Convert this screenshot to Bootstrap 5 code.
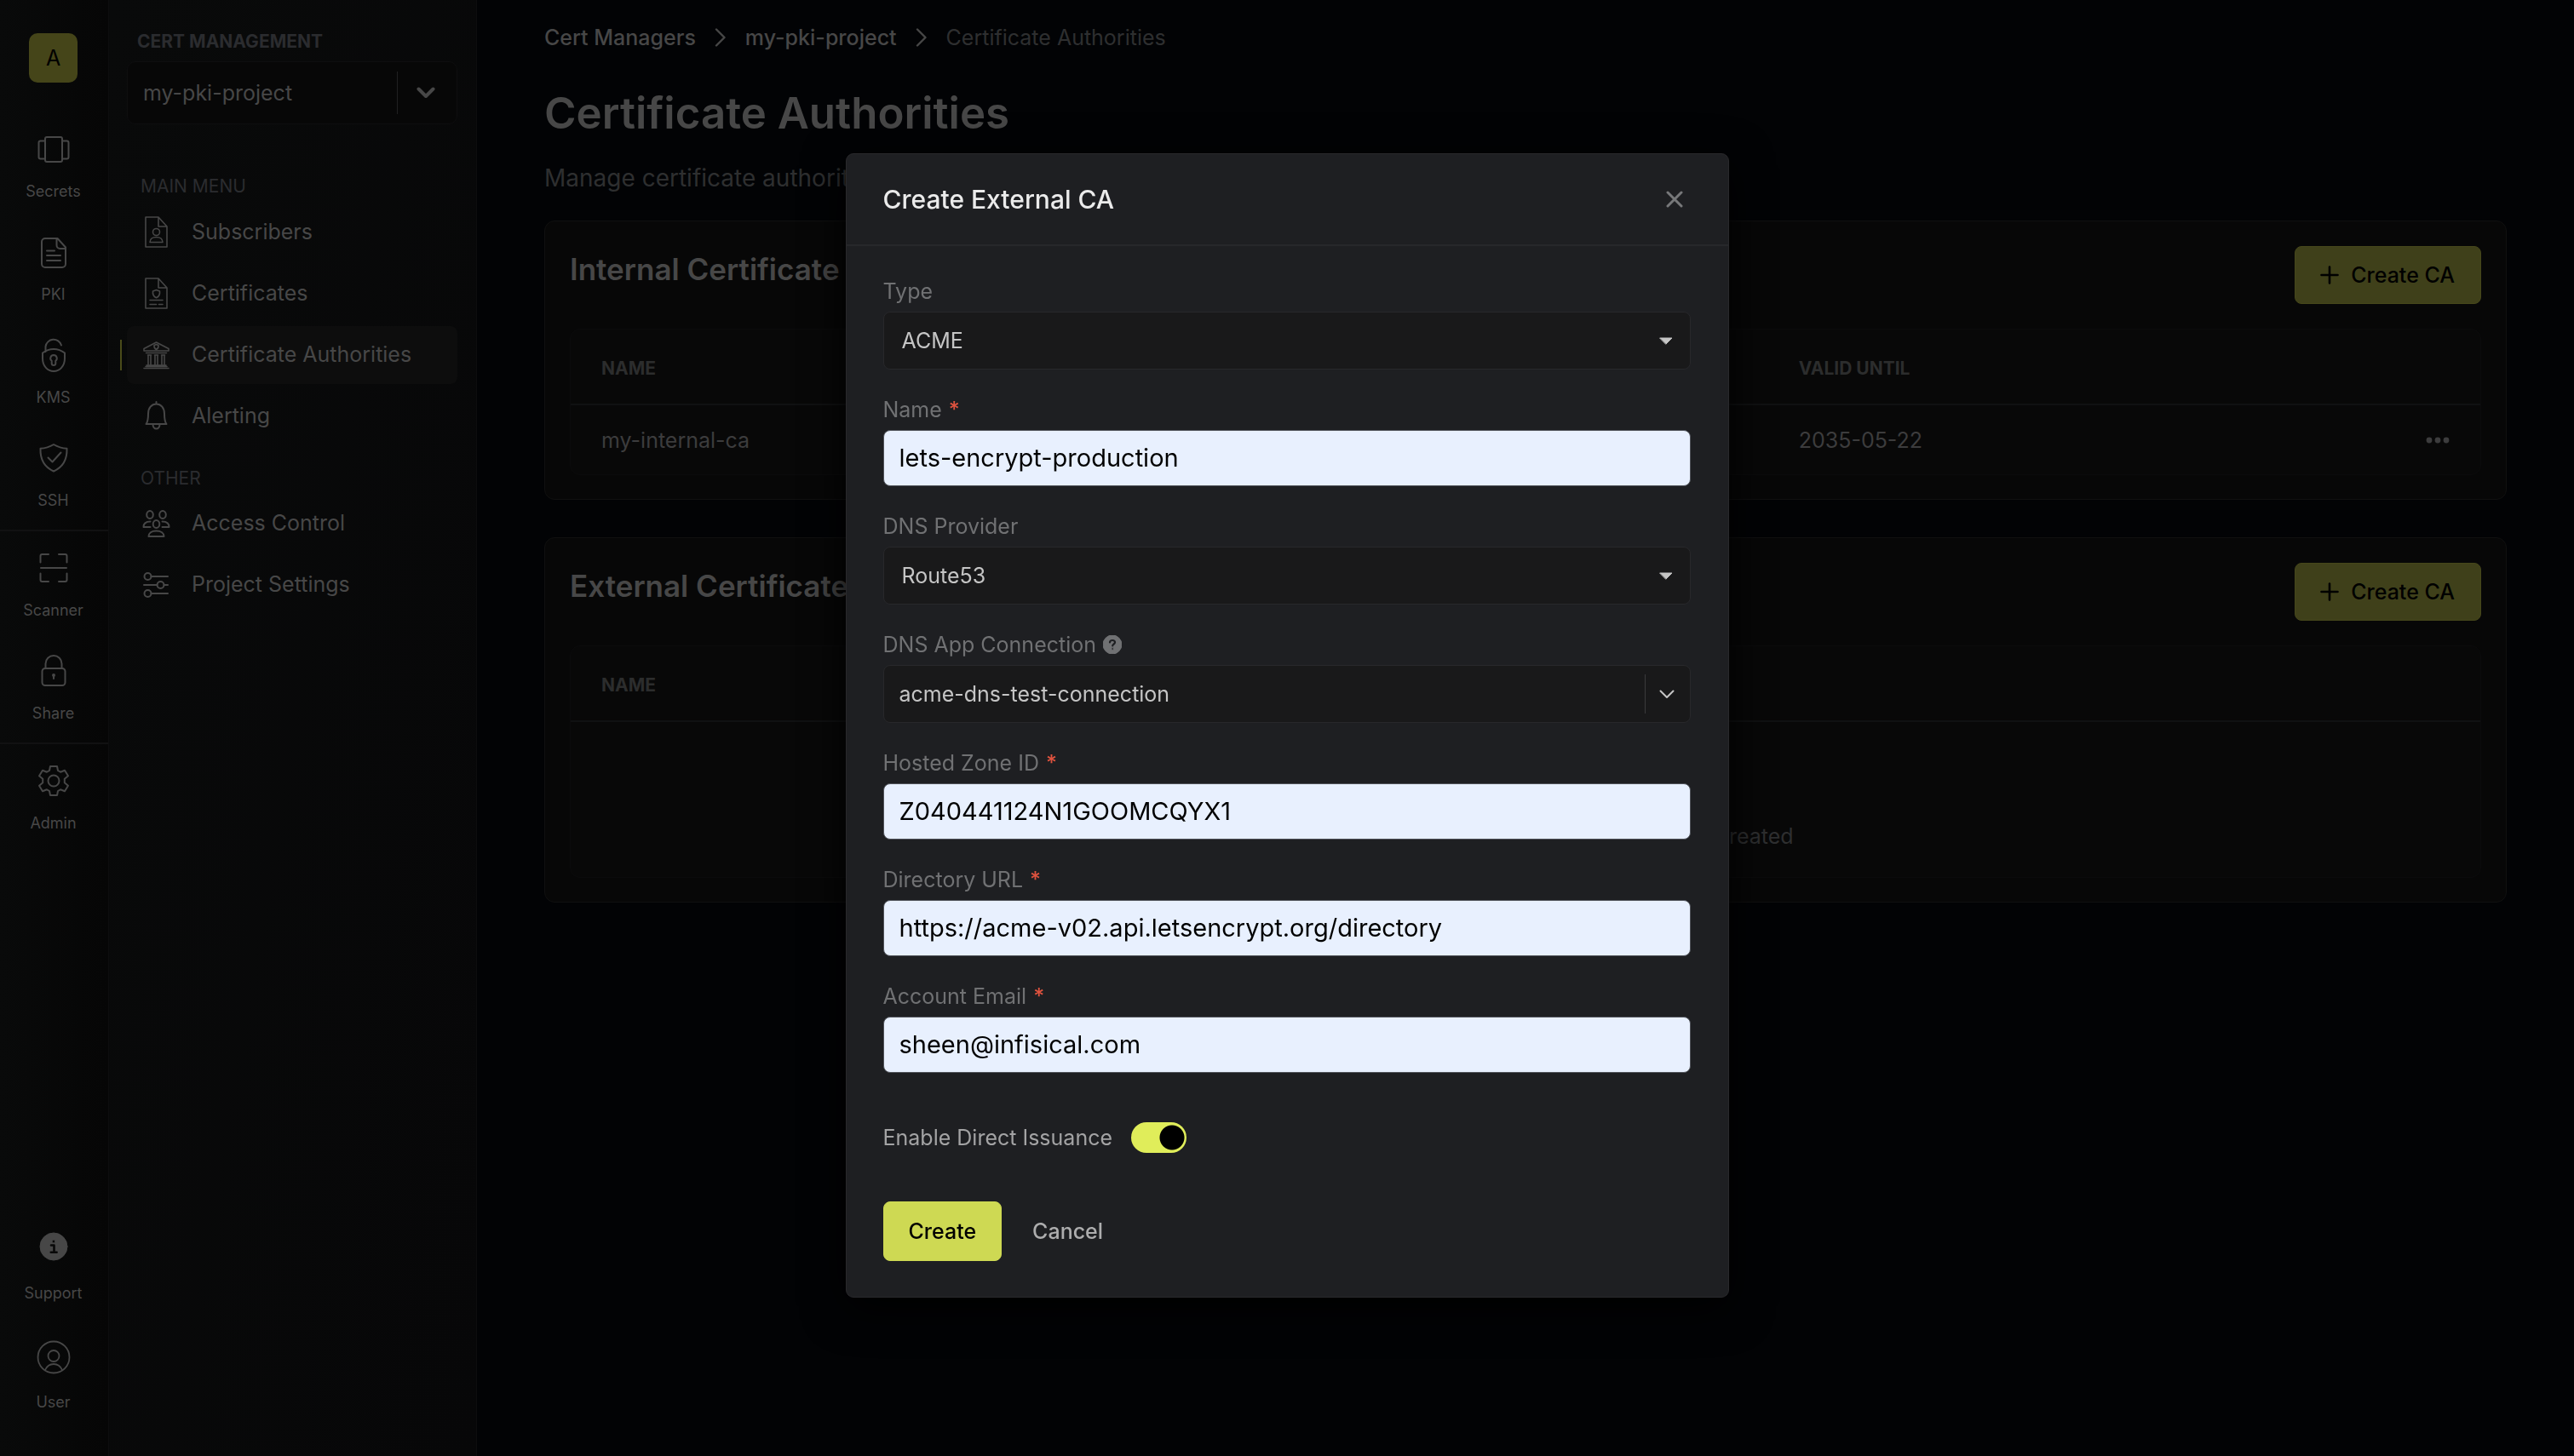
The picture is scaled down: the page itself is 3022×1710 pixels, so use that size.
<!DOCTYPE html>
<html lang="en">
<head>
<meta charset="utf-8">
<meta name="viewport" content="width=device-width, initial-scale=1">
<title>Certificate Authorities</title>
<link href="https://cdn.jsdelivr.net/npm/bootstrap@5.3.0/dist/css/bootstrap.min.css" rel="stylesheet">
<style>
  :root { --ink: #474747; --ink-soft: #2e2f30; --olive: #3f401a; }
  body { font-family: Inter, "Liberation Sans", sans-serif; font-size: 25px; line-height: 36px; color: var(--ink); background: #020305; }
  svg { display: block; flex: none; fill: none; stroke: currentColor; stroke-linecap: round; stroke-linejoin: round; }
  a { color: inherit; text-decoration: none; }
  .shell { min-height: 100vh; }

  /* product rail */
  .rail { width: 128px; background: linear-gradient(90deg, #090a0a, #060606); border-right: 1px solid #0d0d0e; padding: 39px 2px 31px 0; }
  .avatar { width: 57px; height: 58px; border-radius: 10px; background: #454519; color: #000; margin: 0 auto 38px; }
  .rail-item { height: 121px; padding-top: 19px; gap: 15px; font-size: 18px; line-height: 24px; }
  .rail-item.tall { height: 128px; gap: 21px; }
  .rail-rule { height: 2px; margin: 3px -2px 3px 0; background: #111112; }

  /* project sidebar */
  .side { width: 432px; padding: 33px 22px 0 21px; background: linear-gradient(100deg, #090a0a, #070708); border-right: 1px solid #0d0d0e; }
  .caption { font-size: 21px; line-height: 32px; color: #2b2c2f; }
  .caption.first { margin-bottom: 4px; }
  .caption.next { margin: 23px 0 3px; }
  .combo { border: 1px solid #0e0e0f; border-radius: 10px; }
  .combo select, .field select { appearance: none; background: transparent; border: 0; color: inherit; outline: 0; min-width: 0; padding: 0; font: inherit; }
  .combo.project { height: 74px; background: #070707; padding: 0 25px 1px 18px; margin: 7px 0 57px; }
  .combo .split { width: 1px; align-self: stretch; }
  .combo.project .split { background: #202021; margin: 11px 22px 10px 0; }
  .side-link { height: 68px; margin-bottom: 4px; padding: 0 0 2px 13px; gap: 20px; border-radius: 8px; position: relative; }
  .side-link.current { background: #0d0d0d; }
  .side-link.current::before { content: ""; position: absolute; left: -8px; top: 16px; bottom: 16px; width: 2px; background: #4a4b1a; }

  /* page */
  .page { padding: 26px 79px 60px; }
  .crumbs { gap: 22px; margin-bottom: 39px; font-weight: 500; }
  .crumbs .here { font-weight: 400; color: var(--ink-soft); }
  h1 { font-size: 51px; line-height: 64px; font-weight: 600; margin: 0 0 24px; }
  .intro { font-size: 28px; line-height: 40px; color: var(--ink-soft); margin: 0 0 30px; }
  .panel { border: 1px solid #101010; border-radius: 12px; background: #070707; padding: 29px 29px 28px; margin-bottom: 44px; }
  .panel h2 { font-size: 35px; line-height: 54px; font-weight: 600; margin: 0; }
  .btn { font-size: 25px; line-height: 36px; font-weight: 500; border-radius: 8px; padding: 15px 29px; }
  .btn-olive, .btn-olive:hover { background: var(--olive); border-color: #46471b; color: #000; padding-right: 30px; gap: 14px; }
  .grid-box { border: 1px solid #0b0b0c; border-radius: 12px; margin-top: 29px; background: #080808; }
  .grid-box .table { --bs-table-bg: transparent; --bs-table-color: var(--ink); color: var(--ink); margin: 0; border-color: #101112; }
  .grid-box th { font-size: 21px; font-weight: 700; color: #2c2d2d; padding: 29px 36px 24px; border-bottom: 2px solid #101112; line-height: 34px; }
  .grid-box td { padding: 23px 36px 22px; border: 0; line-height: 36px; color: #3c3c3d; vertical-align: middle; }
  .grid-box .wide { width: 62.7%; }
  .grid-box td.blank { padding: 116px 36px 30px; color: var(--ink-soft); }

  /* dialog */
  .modal-dialog { max-width: 1037px; margin: 180px auto; }
  .modal-content { background: #1e1f22; border: 1px solid #29292c; border-radius: 9px; color: #c5c5c5; box-shadow: 0 12px 50px #000; }
  .modal-header { padding: 0 53px 0 43px; height: 108px; border-bottom: 2px solid #27282b; }
  .modal-title { font-size: 30px; line-height: 44px; font-weight: 500; color: #ebebeb; }
  .modal-body { padding: 35px 44px 42px 43px; }
  .plain { background: none; border: 0; padding: 0; color: #77787a; }
  .plain.dots { color: inherit; }
  .dots svg { fill: currentColor; stroke: none; }
  .field { margin-bottom: 29px; }
  .field label { display: flex; align-items: center; gap: 8px; margin-bottom: 6px; color: #707173; }
  .field i { color: #e0533f; font-style: normal; font-weight: 500; }
  .field .combo { height: 68px; background: #19191a; border-color: #28282b; border-radius: 8px; padding: 0 20px 0 21px; }
  .field .combo.split-combo { padding: 0 18px; }
  .field .combo .split { background: #3a3a3c; margin: 10px 16px 10px 0; }
  .field .combo select { padding-bottom: 1px; }
  .field .form-control { height: 66px; padding: 0 18px 2px; border: 1px solid #50535a; border-radius: 8px; background: #e8f0fe; color: #000; font-size: 29px; }
  .toggle-row { margin: 57px 0; gap: 22px; height: 37px; color: #a3a3a4; }
  .toggle-row .form-check-input { width: 65px; height: 36px; margin: 0; border: 0; background-color: #e0ed5a; background-image: radial-gradient(circle at 48px 18px, #000 14px, transparent 15px); box-shadow: none; background-position: 0 0; background-size: 100% 100%; }
  .btn-lime, .btn-lime:hover { background: #ced953; border-color: #ced953; color: #000; padding: 16px 29px; }
  .btn-ghost, .btn-ghost:hover { color: #adadae; border: 0; padding: 16px 36px; }
</style>
<script src="https://cdn.jsdelivr.net/npm/bootstrap@5.3.0/dist/js/bootstrap.bundle.min.js" defer></script>
</head>
<body>
<div class="shell d-flex">
  <nav class="rail d-flex flex-column flex-shrink-0">
    <div class="avatar d-flex align-items-center justify-content-center">A</div>
    <a href="#" class="rail-item d-flex flex-column align-items-center">
      <svg width="44" height="44" viewBox="0 0 44 44" stroke-width="2"><rect x="12" y="7" width="20" height="29" rx="2"/><path d="M12 11.500H6.500a2 2 0 0 0-2 2v17a2 2 0 0 0 2 2H12M32 11.500h5.500a2 2 0 0 1 2 2v17a2 2 0 0 1-2 2H32"/></svg>Secrets</a>
    <a href="#" class="rail-item d-flex flex-column align-items-center">
      <svg width="44" height="44" viewBox="0 0 44 44" stroke-width="2"><path d="M12 5h14.500L36 15.500V35a4 4 0 0 1-4 4H12a4 4 0 0 1-4-4V9a4 4 0 0 1 4-4zM25.500 5.500V13a4 4 0 0 0 4 4H36M14 19.500h9M14 25h16M14 31h16"/></svg>PKI</a>
    <a href="#" class="rail-item d-flex flex-column align-items-center">
      <svg width="44" height="44" viewBox="0 0 44 44" stroke-width="2"><path d="M12.500 17V11a9.500 9.500 0 0 1 18.500-1.500M22 14c4 0 9 1.500 13 4.500V25c0 9-6 15-13 15S9 34 9 25v-6.500c4-3 9-4.500 13-4.500z"/><path d="M22 21a3.800 3.800 0 0 1 2.300 6.800v3a2.300 2.300 0 0 1-4.600 0v-3A3.800 3.800 0 0 1 22 21z"/></svg>KMS</a>
    <a href="#" class="rail-item d-flex flex-column align-items-center">
      <svg width="44" height="44" viewBox="0 0 44 44" stroke-width="2"><path d="M22 5c5 3 10 4.500 15.500 4.800C38 23 32 32 22 36.500 12 32 6 23 6.500 9.800 12 9.500 17 8 22 5zM15.500 20.500l5 5 10-11"/></svg>SSH</a>
    <div class="rail-rule"></div>
    <a href="#" class="rail-item d-flex flex-column align-items-center">
      <svg width="44" height="44" viewBox="0 0 44 44" stroke-width="2"><path d="M6.500 14.500V7a2 2 0 0 1 2-2H16M28 5h7.500a2 2 0 0 1 2 2v7.500M6.500 27.500V35a2 2 0 0 0 2 2H16M28 37h7.500a2 2 0 0 0 2-2v-7.500M7 21h30"/></svg>Scanner</a>
    <a href="#" class="rail-item d-flex flex-column align-items-center">
      <svg width="44" height="44" viewBox="0 0 44 44" stroke-width="2"><path d="M12.500 18v-5.500a9.500 9.500 0 0 1 19 0V18"/><rect x="8.500" y="18" width="27" height="20" rx="3.500"/><circle cx="22" cy="26" r="1"/><path d="M22 27v3"/></svg>Share</a>
    <div class="rail-rule"></div>
    <a href="#" class="rail-item d-flex flex-column align-items-center">
      <svg width="44" height="44" viewBox="0 0 44 44" stroke-width="2"><circle cx="22" cy="21" r="6.500"/><path d="M18 4h8l1 5 3 1.700 5-2 4 6.500-4.200 3.500v4.600L39 26.800l-4 6.500-5-2-3 1.700-1 5h-8l-1-5-3-1.700-5 2-4-6.500 4.200-3.500v-4.600L5 15.200l4-6.500 5 2L17 9z"/></svg>Admin</a>
    <div class="mt-auto">
      <a href="#" class="rail-item tall d-flex flex-column align-items-center">
        <svg width="44" height="44" viewBox="0 0 44 44" stroke="none"><circle cx="22" cy="22" r="16" fill="currentColor"/><circle cx="22" cy="16" r="2" fill="#080808"/><path d="M19 20.500h3.500V28M18.800 28.800h6.800" stroke="#080808" stroke-width="2.600"/></svg>Support</a>
      <a href="#" class="rail-item tall d-flex flex-column align-items-center">
        <svg width="44" height="44" viewBox="0 0 44 44" stroke-width="1.800"><circle cx="22" cy="24" r="18.500"/><circle cx="22" cy="22.500" r="6.500"/><path d="M12 39c2-4.500 6-7 10-7s8 2.500 10 7"/></svg>User</a>
    </div>
  </nav>

  <aside class="side flex-shrink-0">
    <label for="project" class="caption fw-bold d-block ps-2 ms-1">CERT MANAGEMENT</label>
    <div class="combo project d-flex align-items-center">
      <select id="project" class="flex-grow-1"><option>my-pki-project</option></select>
      <span class="split"></span>
      <svg width="22" height="14" viewBox="0 0 22 14" stroke-width="4"><path d="M2.500 2.500L11 11l8.500-8.500"/></svg>
    </div>
    <div class="caption first ps-3">MAIN MENU</div>
    <a href="#" class="side-link d-flex align-items-center">
      <svg width="43" height="40" viewBox="0 0 43 40" stroke-width="1.600"><path d="M9 3h15l10 11v24H9zM24 3v11h10"/><circle cx="21.500" cy="20.500" r="4"/><path d="M14 32.500c0-4 3.500-6 7.500-6s7.500 2 7.500 6z"/></svg>Subscribers</a>
    <a href="#" class="side-link d-flex align-items-center">
      <svg width="43" height="40" viewBox="0 0 43 40" stroke-width="1.600"><path d="M9 3h15l10 11v24H9zM24 3v11h10"/><path d="M21.500 16.500l4 1.500c.5 4-1 6.500-4 7.800-3-1.300-4.500-3.800-4-7.800zM14 28.500h15M14 33.500h7.500M24.500 33.500H29"/></svg>Certificates</a>
    <a href="#" class="side-link current d-flex align-items-center">
      <svg width="43" height="40" viewBox="0 0 43 40" stroke-width="1.600"><path d="M7 13.500L21.500 6 36 13.500V16H7zM9.500 18.500h24M11.500 21h4M19.500 21h4M27.500 21h4M12 21v11M15 21v11M20 21v11M23 21v11M28 21v11M31 21v11M10 33h23M7 36.500h29M9 34.500h25"/><path d="M21.500 8.500l2.500 1c.3 2.500-.6 4-2.500 5-1.900-1-2.800-2.500-2.500-5z"/></svg>Certificate Authorities</a>
    <a href="#" class="side-link d-flex align-items-center">
      <svg width="43" height="40" viewBox="0 0 43 40" stroke-width="2"><path d="M21.500 4v2.500M9.500 30c2-2.500 2.500-5 2.500-12 0-7 4-11.500 9.500-11.500S31 11 31 18c0 7 .5 9.500 2.500 12zM17.500 30.500a4 5 0 0 0 8 0"/></svg>Alerting</a>
    <div class="caption next ps-3">OTHER</div>
    <a href="#" class="side-link d-flex align-items-center">
      <svg width="43" height="40" viewBox="0 0 43 40" stroke-width="2"><ellipse cx="14" cy="10.500" rx="3.800" ry="4.500"/><ellipse cx="29" cy="10.500" rx="3.800" ry="4.500"/><ellipse cx="21.500" cy="21.500" rx="3.800" ry="4.500"/><path d="M14.500 25h-8c0-4 3-6.500 8-6.500M28.500 25h8c0-4-3-6.500-8-6.500M12.500 36c0-4 3.500-6.500 9-6.500s9 2.500 9 6.500z"/></svg>Access Control</a>
    <a href="#" class="side-link d-flex align-items-center">
      <svg width="43" height="40" viewBox="0 0 43 40" stroke-width="2"><circle cx="11.500" cy="11" r="4"/><circle cx="26.500" cy="21" r="4"/><circle cx="11.500" cy="31" r="4"/><path d="M15.500 11H35M7 21h15.500M30.500 21H35M15.500 31H35"/></svg>Project Settings</a>
  </aside>

  <main class="page flex-grow-1">
    <nav class="crumbs d-flex align-items-center" aria-label="Breadcrumb">
      <a href="#">Cert Managers</a>
      <svg width="14" height="22" viewBox="0 0 14 22" stroke-width="2.400"><path d="M2 1.500l9.500 9.500L2 20.500"/></svg>
      <a href="#">my-pki-project</a>
      <svg width="14" height="22" viewBox="0 0 14 22" stroke-width="2.400"><path d="M2 1.500l9.500 9.500L2 20.500"/></svg>
      <span class="here">Certificate Authorities</span>
    </nav>
    <h1>Certificate Authorities</h1>
    <p class="intro">Manage certificate authorities</p>

    <section class="panel">
      <div class="d-flex align-items-start justify-content-between">
        <h2>Internal Certificate Authorities</h2>
        <button type="button" class="btn btn-olive d-flex align-items-center"><svg width="22" height="22" viewBox="0 0 22 22" stroke-width="2.600"><path d="M11 1.500v19M1.500 11h19"/></svg>Create CA</button>
      </div>
      <div class="grid-box">
        <table class="table">
          <thead><tr><th class="wide">NAME</th><th>VALID UNTIL</th><th></th></tr></thead>
          <tbody><tr><td>my-internal-ca</td><td>2035-05-22</td>
            <td><button type="button" class="plain dots d-block ms-auto" aria-label="More options"><svg width="28" height="8" viewBox="0 0 28 8"><circle cx="4" cy="4" r="3.400"/><circle cx="14" cy="4" r="3.400"/><circle cx="24" cy="4" r="3.400"/></svg></button></td></tr></tbody>
        </table>
      </div>
    </section>

    <section class="panel">
      <div class="d-flex align-items-start justify-content-between">
        <h2>External Certificate Authorities</h2>
        <button type="button" class="btn btn-olive d-flex align-items-center"><svg width="22" height="22" viewBox="0 0 22 22" stroke-width="2.600"><path d="M11 1.500v19M1.500 11h19"/></svg>Create CA</button>
      </div>
      <div class="grid-box">
        <table class="table">
          <thead><tr><th>NAME</th></tr></thead>
          <tbody><tr><td class="blank text-center">No External Certificate Authorities have been created</td></tr></tbody>
        </table>
      </div>
    </section>
  </main>
</div>

<div class="modal d-block" role="dialog" aria-labelledby="dlg-title">
  <div class="modal-dialog">
    <form class="modal-content">
      <div class="modal-header">
        <h3 class="modal-title" id="dlg-title">Create External CA</h3>
        <button type="button" class="plain" aria-label="Close"><svg width="20" height="20" viewBox="0 0 20 20" stroke-width="3"><path d="M2 2l16 16M18 2L2 18"/></svg></button>
      </div>
      <div class="modal-body">
        <div class="field"><label for="type">Type</label>
          <div class="combo d-flex align-items-center"><select id="type" class="flex-grow-1"><option>ACME</option></select>
            <svg width="16" height="9" viewBox="0 0 16 9" stroke-width="1"><path fill="currentColor" d="M1 1h14L8 8z"/></svg></div></div>
        <div class="field"><label for="name">Name <i>*</i></label><input id="name" class="form-control" value="lets-encrypt-production"></div>
        <div class="field"><label for="dns">DNS Provider</label>
          <div class="combo d-flex align-items-center"><select id="dns" class="flex-grow-1"><option>Route53</option></select>
            <svg width="16" height="9" viewBox="0 0 16 9" stroke-width="1"><path fill="currentColor" d="M1 1h14L8 8z"/></svg></div></div>
        <div class="field"><label for="conn">DNS App Connection
            <svg width="22" height="22" viewBox="0 0 22 22" stroke="none"><circle cx="11" cy="11" r="11" fill="currentColor"/><path d="M8 8.500C8 6.800 9.300 6 11 6s3 1 3 2.500c0 2-2.800 2-2.800 4" stroke="#1e1f22" stroke-width="2.200"/><circle cx="11.200" cy="16" r="1.400" fill="#1e1f22"/></svg></label>
          <div class="combo split-combo d-flex align-items-center"><select id="conn" class="flex-grow-1"><option>acme-dns-test-connection</option></select>
            <span class="split"></span>
            <svg width="18" height="11" viewBox="0 0 18 11" stroke-width="2"><path d="M1.500 1.500L9 9l7.500-7.500"/></svg></div></div>
        <div class="field"><label for="zone">Hosted Zone ID <i>*</i></label><input id="zone" class="form-control" value="Z040441124N1GOOMCQYX1"></div>
        <div class="field"><label for="url">Directory URL <i>*</i></label><input id="url" class="form-control" value="https://acme-v02.api.letsencrypt.org/directory"></div>
        <div class="field"><label for="email">Account Email <i>*</i></label><input id="email" type="email" class="form-control" value="sheen@infisical.com"></div>
        <div class="toggle-row form-switch d-flex align-items-center p-0">
          <label for="direct">Enable Direct Issuance</label>
          <input class="form-check-input" type="checkbox" role="switch" id="direct" checked>
        </div>
        <div class="d-flex">
          <button type="submit" class="btn btn-lime">Create</button>
          <button type="button" class="btn btn-ghost">Cancel</button>
        </div>
      </div>
    </form>
  </div>
</div>
</body>
</html>
